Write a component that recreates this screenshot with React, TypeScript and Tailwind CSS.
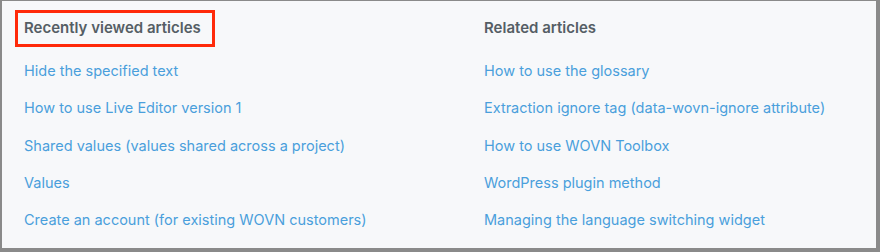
const recent = [
  'Hide the specified text',
  'How to use Live Editor version 1',
  'Shared values (values shared across a project)',
  'Values',
  'Create an account (for existing WOVN customers)',
]

const related = [
  'How to use the glossary',
  'Extraction ignore tag (data-wovn-ignore attribute)',
  'How to use WOVN Toolbox',
  'WordPress plugin method',
  'Managing the language switching widget',
]

function Column({ title, items, boxed }: { title: string; items: string[]; boxed?: boolean }) {
  return (
    <div className="flex flex-col">
      <div className="h-[37px] flex items-center">
        <h3
          className={
            boxed
              ? 'border-[3px] border-[#ff2a0a] h-[37px] -ml-[9px] pl-[6px] pr-[11px] flex items-center text-[15px] font-semibold text-[#555e65]'
              : 'text-[15px] font-semibold text-[#555e65]'
          }
        >
          {title}
        </h3>
      </div>
      <ul className="mt-[14px] flex flex-col gap-[17.3px]">
        {items.map(t => (
          <li key={t} className="h-[20px] flex items-center">
            <a href="#" className="text-[14.5px] text-[#4a9fdc]">{t}</a>
          </li>
        ))}
      </ul>
    </div>
  )
}

export default function App() {
  return (
    <div
      className="w-[880px] h-[252px] bg-[#f7f8fa] border-t border-l-2 border-r-[4px] border-b-[4px] border-[#8a8a8a] pl-[22px] pt-[9px] grid grid-cols-[460px_1fr]"
      style={{ fontFamily: 'Inter, "Noto Sans", sans-serif' }}
    >
      <Column title="Recently viewed articles" items={recent} boxed />
      <Column title="Related articles" items={related} />
    </div>
  )
}
